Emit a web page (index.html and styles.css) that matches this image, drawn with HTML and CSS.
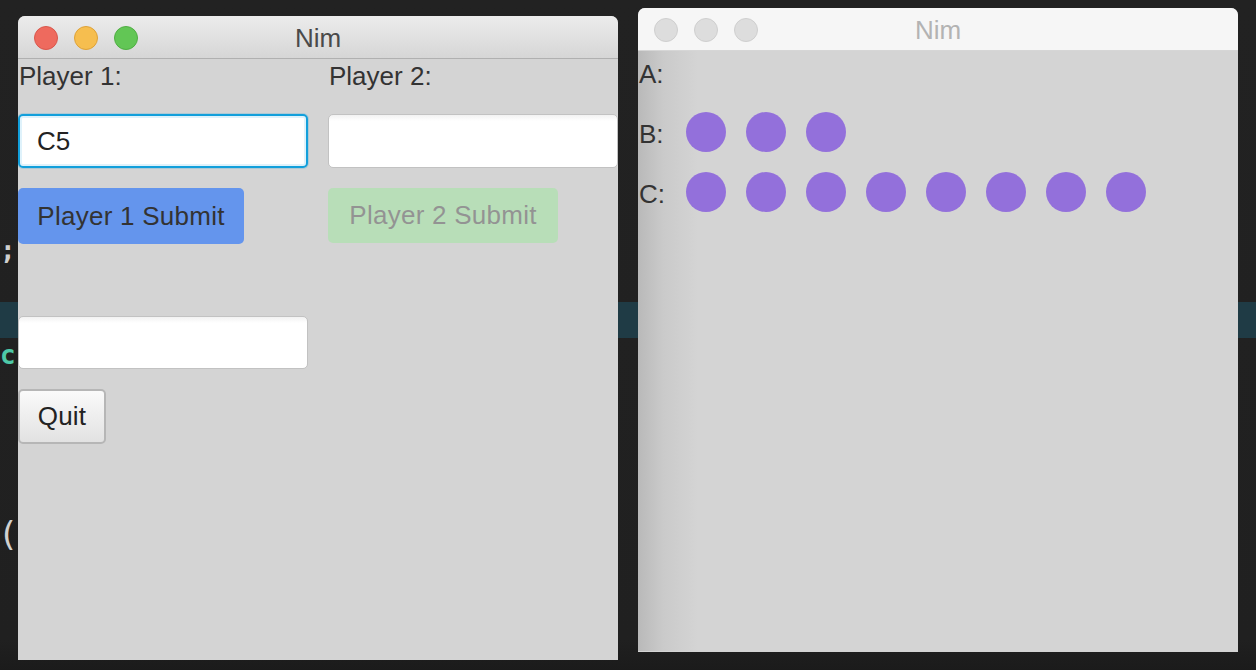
FILE: index.html
```html
<!DOCTYPE html>
<html>
<head>
<meta charset="utf-8">
<title>Nim</title>
<link rel="stylesheet" href="styles.css">
</head>
<body>
<div class="desktop">
  <div class="editor">
    <div class="band"></div>
    <span class="code semi">;</span>
    <span class="code kw">c</span>
    <span class="code paren">(</span>
  </div>

  <div class="window win-left">
    <div class="titlebar">
      <div class="lights">
        <span class="light red"></span>
        <span class="light yellow"></span>
        <span class="light green"></span>
      </div>
      <div class="title">Nim</div>
    </div>
    <div class="form">
      <div class="label">Player 1:</div>
      <div class="label">Player 2:</div>
      <div class="field focused">C5</div>
      <div class="field"></div>
      <div class="cell"><button class="btn btn-blue">Player 1 Submit</button></div>
      <div class="cell"><button class="btn btn-green" disabled>Player 2 Submit</button></div>
      <div class="spacer"></div>
      <div class="spacer"></div>
      <div class="field"></div>
      <div class="spacer"></div>
      <div class="cell"><button class="btn btn-quit">Quit</button></div>
    </div>
  </div>

  <div class="window win-right">
    <div class="titlebar inactive">
      <div class="lights">
        <span class="light gray"></span>
        <span class="light gray"></span>
        <span class="light gray"></span>
      </div>
      <div class="title">Nim</div>
    </div>
    <div class="board">
      <div class="row"><span class="row-label">A:</span></div>
      <div class="row"><span class="row-label">B:</span>
        <span class="dot"></span><span class="dot"></span><span class="dot"></span>
      </div>
      <div class="row"><span class="row-label">C:</span>
        <span class="dot"></span><span class="dot"></span><span class="dot"></span><span class="dot"></span>
        <span class="dot"></span><span class="dot"></span><span class="dot"></span><span class="dot"></span>
      </div>
    </div>
  </div>
</div>
</body>
</html>
```

FILE: styles.css
```css
* { box-sizing: border-box; }

html, body {
  margin: 0;
  padding: 0;
}

body {
  width: 1256px;
  height: 670px;
  overflow: hidden;
  background: #212121;
  font-family: "Liberation Sans", Arial, sans-serif;
}

.desktop {
  position: relative;
  width: 1256px;
  height: 670px;
  background: linear-gradient(to bottom, #222222 0, #202020 640px, #1b1b1b 670px);
}

.editor {
  position: absolute;
  inset: 0;
}

.band {
  position: absolute;
  left: 0;
  right: 0;
  top: 302px;
  height: 36px;
  background: #1f3b45;
}

.code {
  position: absolute;
  font-family: "DejaVu Sans Mono", monospace;
  font-size: 26px;
  line-height: 30px;
  color: #d0d0d0;
}

.semi { left: 0; top: 235px; font-weight: bold; }
.kw { left: 0; top: 340px; color: #4ec9a8; font-weight: bold; }
.paren { left: 2px; top: 514px; font-size: 34px; line-height: 40px; font-family: "DejaVu Sans", sans-serif; }

.window {
  position: absolute;
  width: 600px;
  height: 644px;
  background: #d4d4d4;
  border-radius: 7px 7px 0 0;
  overflow: hidden;
}

.win-left { left: 18px; top: 16px; }
.win-right { left: 638px; top: 8px; }

.titlebar {
  position: relative;
  height: 43px;
  display: flex;
  align-items: center;
  justify-content: center;
  background: linear-gradient(to bottom, #ececec 0, #d6d6d6 100%);
  border-bottom: 1px solid #b0b0b0;
}

.titlebar.inactive {
  background: #f6f6f6;
  border-bottom: 1px solid #d6d6d6;
  height: 43px;
}

.lights {
  position: absolute;
  left: 16px;
  top: 10px;
  display: flex;
  gap: 16px;
}

.light {
  width: 24px;
  height: 24px;
  border-radius: 50%;
  display: block;
}

.red { background: #ee6a5e; border: 1px solid #d9574c; }
.yellow { background: #f6be4f; border: 1px solid #dea238; }
.green { background: #62c655; border: 1px solid #4fae43; }
.gray { background: #dddddd; border: 1px solid #cfcfcf; }

.title {
  font-size: 26px;
  color: #4a4a4a;
  line-height: 30px;
  margin-top: 2px;
}

.inactive .title { color: #b3b3b3; }

.form {
  display: grid;
  grid-template-columns: 290px 290px;
  grid-template-rows: 35px 54px 56px 32px 53px 55px;
  column-gap: 20px;
  row-gap: 20px;
}

.label {
  font-size: 26px;
  line-height: 34px;
  color: #333333;
  padding-left: 1px;
}

.field {
  background: linear-gradient(to bottom, #f2f2f2 0, #ffffff 6px);
  border: 1px solid #c2c2c2;
  border-radius: 5px;
  font-size: 26px;
  line-height: 52px;
  padding-left: 18px;
  color: #222222;
}

.field.focused {
  background: #ffffff;
  border: 2px solid #129fdb;
  box-shadow: inset 0 0 0 2px #dff2fb, 0 0 0 1px rgba(18, 159, 219, 0.2);
  line-height: 50px;
  padding-left: 17px;
}

.cell {
  display: flex;
  align-items: flex-start;
}

.btn {
  font-family: "Liberation Sans", Arial, sans-serif;
  font-size: 26px;
  letter-spacing: 0.25px;
  color: #333333;
  border: none;
  border-radius: 5px;
  padding: 0;
  height: 56px;
  margin: 0;
}

.btn-blue { background: #6495ed; width: 226px; }

.btn-green {
  background: #90ee90;
  opacity: 0.4;
  width: 230px;
  height: 55px;
}

.btn-quit {
  height: 55px;
  width: 88px;
  background: linear-gradient(to bottom, #fafafa 0, #e2e2e2 100%);
  border: 2px solid #b6b6b6;
  border-radius: 5px;
  color: #222222;
}

.board {
  height: 600px;
  padding-top: 1px;
  display: flex;
  flex-direction: column;
  gap: 20px;
  background: linear-gradient(to right, #b9b9b9 0, #cacaca 25px, #d4d4d4 60px);
}

.row {
  height: 40px;
  display: flex;
  align-items: center;
  gap: 20px;
}

.row-label {
  width: 28px;
  font-size: 26px;
  color: #333333;
  line-height: 40px;
  margin-top: 3px;
  padding-left: 1px;
}

.dot {
  width: 40px;
  height: 40px;
  border-radius: 50%;
  background: #9370db;
  display: block;
}
```
